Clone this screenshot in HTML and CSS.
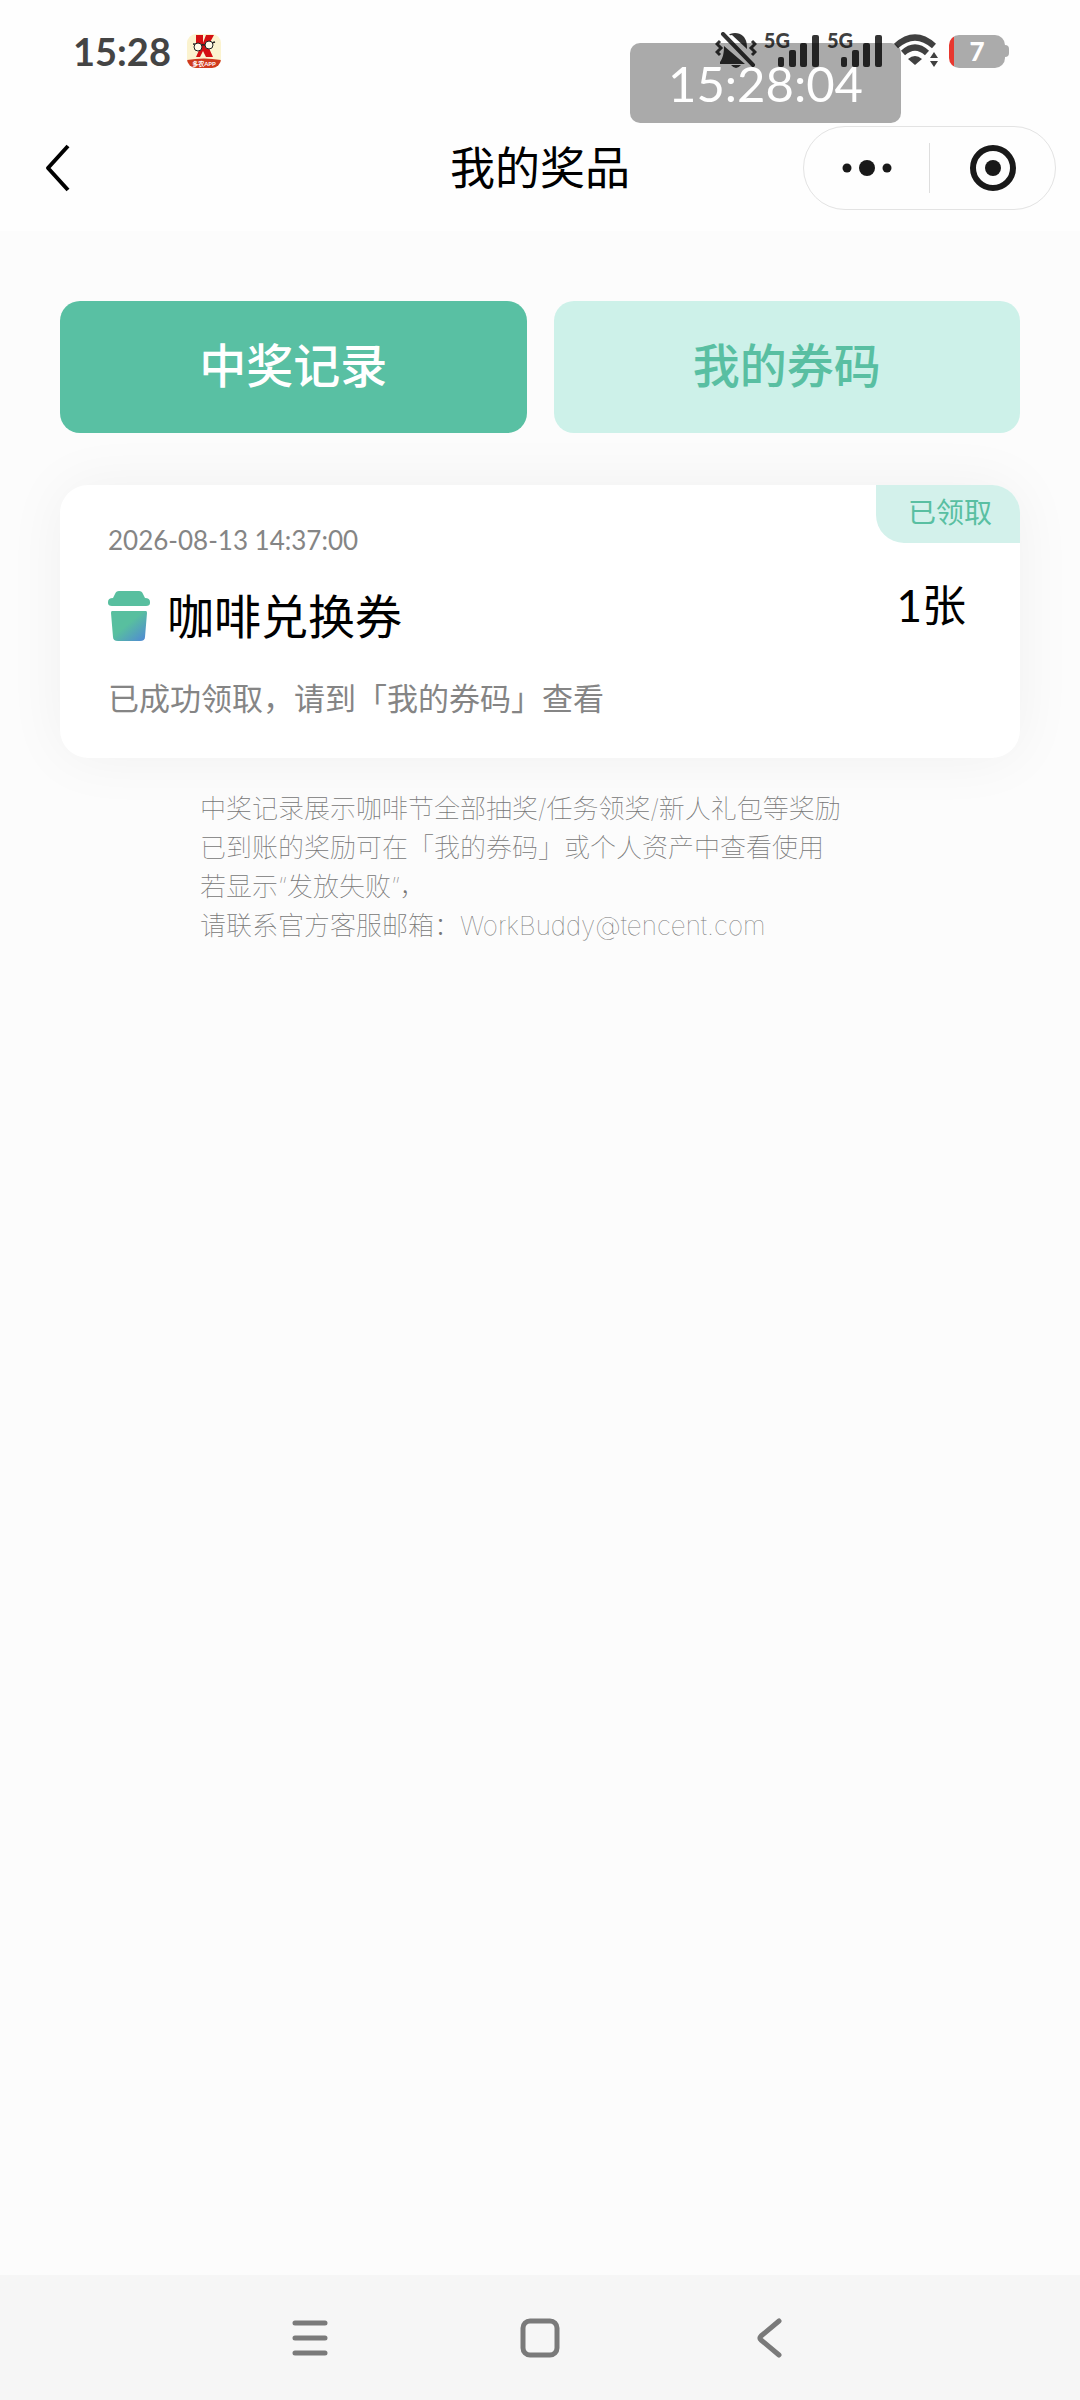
FILE: index.html
```
<!DOCTYPE html>
<html lang="zh-CN">
<head>
    <meta charset="UTF-8">
    <meta name="viewport" content="width=device-width, initial-scale=1.0">
    <title>我的奖品</title>
    <link rel="stylesheet" href="styles.css">
</head>
<body>
    <!-- 状态栏 -->
    <div class="status-bar">
        <div class="status-left">
            <span class="status-time">15:28</span>
            <svg class="app-icon" width="34" height="34" viewBox="0 0 34 34">
                <defs>
                    <clipPath id="appClip"><rect width="34" height="34" rx="9"/></clipPath>
                </defs>
                <g clip-path="url(#appClip)">
                    <rect width="34" height="34" fill="#fbf3cf"/>
                    <path d="M9 1h7v8l3-8h8l-6 11 5 11h-7l-3-6-3 6H9l4-9-4-3z" fill="#d40f12"/>
                    <path d="M6 10l12 1 10-3" stroke="#222" stroke-width="1.5" fill="none"/>
                    <circle cx="11" cy="13" r="4" fill="#fffbe8" stroke="#222" stroke-width="1"/>
                    <circle cx="22" cy="11" r="4" fill="#fffbe8" stroke="#222" stroke-width="1"/>
                    <path d="M0 26q17-3 34 0v8H0z" fill="#cf3a1e"/>
                    <text x="17" y="32" class="app-name">多农APP</text>
                </g>
            </svg>
        </div>
        <div class="status-right">
            <svg width="42" height="38" viewBox="0 0 42 38">
                <g fill="#333">
                    <path d="M12 4C16 0 24 0 28 4c4 4 4 9 4 13L17 3z"/>
                    <path d="M9 14L30 32H5v-2c3-4 4-9 4-16z"/>
                    <path d="M16 33h10q-5 6-10 0z"/>
                </g>
                <path d="M10 1l30 31" stroke="#fff" stroke-width="4"/>
                <path d="M8 2l30 31" stroke="#333" stroke-width="4" stroke-linecap="round"/>
                <path d="M5 9l-3 3 4 4-4 4 3 3M37 9l3 3-4 4 4 4-3 3" fill="none" stroke="#333" stroke-width="3"/>
            </svg>
            <div class="signal">
                <span class="signal-label">5G</span>
                <svg width="42" height="32" viewBox="0 0 42 32" fill="#333">
                    <rect x="0" y="22" width="6" height="10" rx="2"/>
                    <rect x="11" y="15" width="7" height="17" rx="2"/>
                    <rect x="22" y="8" width="7" height="24" rx="2"/>
                    <rect x="34" y="0" width="7" height="32" rx="2"/>
                </svg>
            </div>
            <div class="signal">
                <span class="signal-label">5G</span>
                <svg width="42" height="32" viewBox="0 0 42 32" fill="#333">
                    <rect x="0" y="22" width="6" height="10" rx="2"/>
                    <rect x="11" y="15" width="7" height="17" rx="2"/>
                    <rect x="22" y="8" width="7" height="24" rx="2"/>
                    <rect x="34" y="0" width="7" height="32" rx="2"/>
                </svg>
            </div>
            <svg class="wifi" width="46" height="34" viewBox="0 0 46 34">
                <g fill="none" stroke="#404040" stroke-width="6">
                    <path d="M2 12q19-17 38 0"/>
                    <path d="M9 19q12-11 24 0"/>
                </g>
                <path d="M21 31l-7-6q7-6 14 0z" fill="#404040"/>
                <path d="M40 18l4 6h-8zM40 33l4-6h-8z" fill="#404040"/>
            </svg>
            <div class="battery">
                <span class="battery-body">7</span>
                <span class="battery-cap"></span>
            </div>
        </div>
        <div class="clock-overlay">15:28:04</div>
    </div>

    <!-- 导航栏 -->
    <header class="header">
        <button class="back-btn" type="button" aria-label="返回">
            <svg width="26" height="48" viewBox="0 0 26 48">
                <path d="M23 2L3 24l20 22" fill="none" stroke="#000" stroke-width="4" stroke-linejoin="round"/>
            </svg>
        </button>
        <h1>我的奖品</h1>
        <div class="capsule">
            <button type="button" aria-label="更多">
                <svg width="50" height="18" viewBox="0 0 50 18" fill="#191919">
                    <circle cx="5" cy="9" r="4.5"/>
                    <circle cx="25" cy="9" r="8"/>
                    <circle cx="45" cy="9" r="4.5"/>
                </svg>
            </button>
            <span class="capsule-line"></span>
            <button type="button" aria-label="关闭">
                <svg width="48" height="48" viewBox="0 0 48 48">
                    <circle cx="24" cy="24" r="20" fill="none" stroke="#191919" stroke-width="6"/>
                    <circle cx="24" cy="24" r="8" fill="#191919"/>
                </svg>
            </button>
        </div>
    </header>

    <main class="content">
        <div class="tabs">
            <button class="tab tab-active" type="button">中奖记录</button>
            <button class="tab" type="button">我的券码</button>
        </div>

        <!-- 中奖记录 -->
        <section class="card">
            <span class="card-tag">已领取</span>
            <div class="card-info">
                <div class="card-time">2026-08-13 14:37:00</div>
                <div class="card-title">
                    <svg width="42" height="50" viewBox="0 0 42 50">
                        <defs>
                            <linearGradient id="cup" x1="0" y1="0" x2="1" y2="1">
                                <stop offset="0.45" stop-color="#58bf9f"/>
                                <stop offset="1" stop-color="#4f86d8"/>
                            </linearGradient>
                        </defs>
                        <path d="M11 0h20q3 0 4 3l2 4q5 0 5 4v1q0 3-4 3H4q-4 0-4-3v-1q0-4 5-4l2-4q1-3 4-3z" fill="#58bf9f"/>
                        <path d="M4 20h34q1 0 1 2l-2 24q0 4-5 4H10q-5 0-5-4L3 22q0-2 1-2z" fill="url(#cup)"/>
                    </svg>
                    <h2>咖啡兑换券</h2>
                </div>
                <p class="card-desc">已成功领取，请到「我的券码」查看</p>
            </div>
            <div class="card-count">1张</div>
        </section>

        <p class="note">
            中奖记录展示咖啡节全部抽奖/任务领奖/新人礼包等奖励<br>
            已到账的奖励可在「我的券码」或个人资产中查看使用<br>
            若显示“发放失败”，<br>
            请联系官方客服邮箱：WorkBuddy@tencent.com
        </p>
    </main>

    <!-- 系统按键 -->
    <nav class="nav-bar">
        <button type="button" aria-label="任务">
            <svg width="40" height="40" viewBox="0 0 40 40" fill="none" stroke="#7a7a7a" stroke-width="5" stroke-linecap="round">
                <path d="M5 5h30M5 20h30M5 35h30"/>
            </svg>
        </button>
        <button type="button" aria-label="主页">
            <svg width="40" height="40" viewBox="0 0 40 40" fill="none" stroke="#7a7a7a" stroke-width="5">
                <rect x="3" y="3" width="34" height="34" rx="7"/>
            </svg>
        </button>
        <button type="button" aria-label="返回上一级">
            <svg width="40" height="40" viewBox="0 0 40 40" fill="none" stroke="#7a7a7a" stroke-width="5" stroke-linecap="round" stroke-linejoin="round">
                <path d="M29 3L11 18q-2 2 0 4l18 15"/>
            </svg>
        </button>
    </nav>
</body>
</html>
```

FILE: styles.css
```
* {
    margin: 0;
    padding: 0;
    box-sizing: border-box;
}

body {
    font-family: Lato, 'Noto Sans CJK SC', sans-serif;
    background: #fcfcfc;
    color: #000;
    min-height: 100vh;
    display: flex;
    flex-direction: column;
}

svg {
    display: block;
    flex-shrink: 0;
}

button {
    font-family: inherit;
    border: none;
    background: none;
    cursor: pointer;
}

/* 状态栏 */
.status-bar {
    position: relative;
    display: flex;
    justify-content: space-between;
    align-items: center;
    height: 102px;
    padding: 0 71px 0 73px;
    background: #fefefe;
}

.status-left {
    display: flex;
    align-items: center;
    gap: 16px;
}

.status-time {
    font-size: 38px;
    font-weight: 700;
    line-height: 48px;
    color: #444;
}

.app-name {
    font-size: 6px;
    font-weight: 700;
    fill: #fff;
    text-anchor: middle;
}

.status-right {
    display: flex;
    align-items: center;
    gap: 7px;
}

.signal {
    display: flex;
    align-items: flex-end;
}

.signal-label {
    align-self: flex-start;
    margin-right: -12px;
    font-size: 20px;
    font-weight: 900;
    line-height: 10px;
    color: #404040;
}

.wifi {
    margin-left: 4px;
}

.battery {
    display: flex;
    align-items: center;
    margin-left: 2px;
}

.battery-body {
    width: 56px;
    height: 33px;
    border-radius: 10px;
    background: linear-gradient(90deg, #e8382f 5px, #ababab 5px);
    color: #fff;
    font-size: 26px;
    font-weight: 900;
    line-height: 33px;
    text-align: center;
}

.battery-cap {
    width: 4px;
    height: 12px;
    border-radius: 0 4px 4px 0;
    background: #ababab;
}

/* 悬浮时钟 */
.clock-overlay {
    position: absolute;
    top: 43px;
    right: 179px;
    padding: 10px 38px;
    border-radius: 10px;
    background: rgba(0, 0, 0, 0.33);
    color: #fff;
    font-size: 49px;
    line-height: 60px;
}

/* 导航栏 */
.header {
    display: grid;
    grid-template-columns: 1fr auto 1fr;
    align-items: center;
    padding: 24px 24px 21px;
    background: #fefefe;
}

.back-btn {
    justify-self: start;
    padding-left: 21px;
}

h1 {
    font-size: 45px;
    font-weight: 400;
    line-height: 60px;
}

.capsule {
    justify-self: end;
    display: flex;
    align-items: center;
    height: 84px;
    border: 1px solid #e3e3e3;
    border-radius: 42px;
}

.capsule button {
    display: flex;
    align-items: center;
    justify-content: center;
    width: 125px;
    height: 82px;
}

.capsule-line {
    width: 1px;
    height: 50px;
    background: #dedede;
}

/* 内容 */
.content {
    flex: 1;
    padding: 70px 60px;
}

.tabs {
    display: grid;
    grid-template-columns: 1fr 1fr;
    gap: 27px;
    margin-bottom: 52px;
}

.tab {
    height: 132px;
    padding-bottom: 10px;
    border-radius: 20px;
    background: #cdf1e9;
    color: #59bfa2;
    font-size: 47px;
    font-weight: 500;
}

.tab-active {
    background: #59c0a3;
    color: #fff;
}

.card {
    position: relative;
    display: flex;
    justify-content: space-between;
    align-items: center;
    padding: 35px 54px 37px 48px;
    border-radius: 28px;
    background: #fff;
    box-shadow: 0 0 60px rgba(0, 0, 0, 0.05);
}

.card-tag {
    position: absolute;
    top: 0;
    right: 0;
    padding: 0 28px 4px 32px;
    border-radius: 0 28px 0 28px;
    background: #d3f1eb;
    color: #59bfa2;
    font-size: 28px;
    line-height: 54px;
}

.card-time {
    font-size: 26px;
    line-height: 40px;
    color: #858585;
}

.card-title {
    display: flex;
    align-items: center;
    gap: 17px;
    margin: 26px 0 30px;
}

h2 {
    font-size: 47px;
    font-weight: 400;
    line-height: 60px;
}

.card-desc {
    font-size: 31px;
    line-height: 45px;
    color: #858585;
}

.card-count {
    margin-bottom: 32px;
    font-size: 44px;
    font-weight: 400;
    line-height: 60px;
}

.note {
    margin: 31px 0 0 140px;
    color: #777;
    font-family: Inter, 'Noto Sans CJK SC', sans-serif;
    font-size: 26px;
    font-weight: 100;
    line-height: 39px;
}

/* 系统按键 */
.nav-bar {
    display: flex;
    justify-content: center;
    align-items: center;
    gap: 190px;
    height: 125px;
    background: #f6f6f6;
}
```
